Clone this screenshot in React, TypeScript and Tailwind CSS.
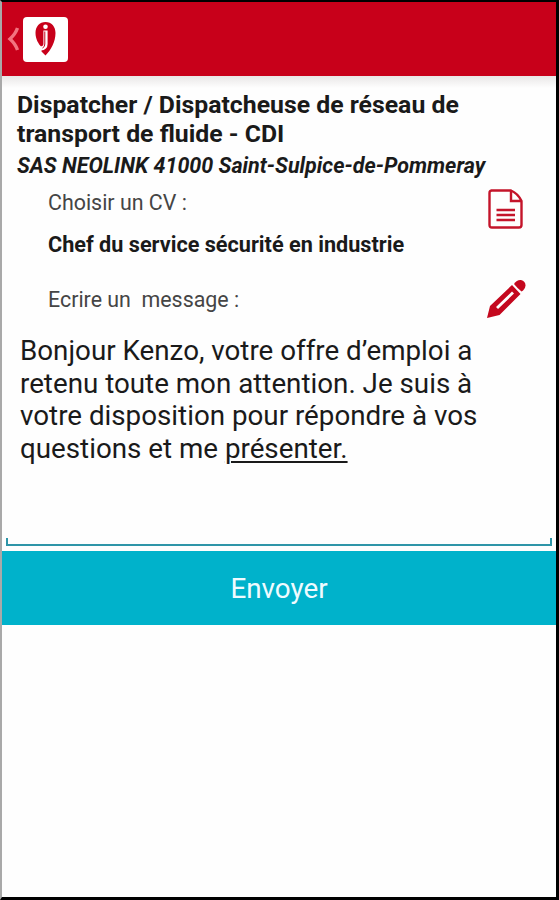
import React from "react";

const App = () => {
  return (
    <div className="flex h-[900px] w-[559px] flex-col overflow-hidden border-t-2 border-r-3 border-b-3 border-l-2 border-t-black border-r-black border-b-black border-l-[#a9a9a9] bg-[#fefefe] font-['Roboto',sans-serif] text-[#1a1a1a]">
      <Header />
      <main className="flex flex-col bg-linear-to-b from-[#e9e7e7] to-[#fefefe] to-[12px]">
        <JobSummary />

        {/* CV */}
        <section className="flex h-[77px] justify-between pr-[33px] pl-[46px]">
          <div className="flex flex-col">
            <p className="mt-[13px] text-[21.4px] leading-6 whitespace-pre text-[#454545]">Choisir un CV :</p>
            <p className="mt-[18px] text-[21.65px] leading-6 font-bold whitespace-pre">
              Chef du service sécurité en industrie
            </p>
          </div>
          <DocumentIcon />
        </section>

        {/* Message */}
        <section className="flex h-[66px] justify-between pr-[30px] pl-[46px]">
          <p className="mt-[33px] text-[21.4px] leading-6 whitespace-pre text-[#454545]">Ecrire un  message :</p>
          <PencilIcon />
        </section>
        <Message />
      </main>
      <button className="mt-[5px] h-[74px] shrink-0 bg-[#00b2cb] pt-[2px] text-[27.8px] text-[#effbff]">
        Envoyer
      </button>
    </div>
  );
};

const Header = () => {
  return (
    <header className="flex h-[74px] shrink-0 items-center bg-[#c8001a] pl-[5px]">
      <svg width="12" height="24" viewBox="0 0 12 24" fill="none" stroke="#f27480" strokeWidth="3.4">
        <path d="M10.500 1Q8.500 7 3 12Q8.500 17 10.500 23" />
      </svg>
      <div className="ml-[4px] flex size-[45px] items-center justify-center rounded-[4px] bg-white">
        <svg width="44" height="44" viewBox="0 0 44 44">
          <path
            d="M21.500 5C15.500 5 11.500 9.500 11.500 16C11.500 22 14.500 27 17.500 30L17.500 34.500L21.500 38.500C27 33 31.500 25 31.500 16C31.500 9.500 27.500 5 21.500 5Z"
            fill="#c8001a"
          />
          <circle cx="21.500" cy="9.800" r="2.300" fill="#fff" />
          <path d="M21.500 13.500V27Q21.500 31 16.500 31.500" fill="none" stroke="#fff" strokeWidth="4.200" />
          <path d="M20.800 14.500V27Q20.800 30 18.500 31" fill="none" stroke="#c8001a" strokeWidth="1" />
        </svg>
      </div>
    </header>
  );
};

const JobSummary = () => {
  return (
    <section className="flex flex-col pt-[14px] pl-[15px] whitespace-nowrap">
      <h1 className="text-[24.8px] leading-[29px] font-bold">
        Dispatcher / Dispatcheuse de réseau de
        <br />
        transport de fluide - CDI
      </h1>
      <p className="mt-[6px] text-[21.5px] leading-6 font-bold italic">
        SAS NEOLINK 41000 Saint-Sulpice-de-Pommeray
      </p>
    </section>
  );
};

const Message = () => {
  return (
    <section className="mx-[4px] flex h-[225px] flex-col justify-between">
      <p className="mt-[14px] pl-[14px] text-[27.75px] leading-[32.5px] whitespace-nowrap">
        Bonjour Kenzo, votre offre d’emploi a
        <br />
        retenu toute mon attention. Je suis à
        <br />
        votre disposition pour répondre à vos
        <br />
        questions et me{" "}
        <span className="underline decoration-[1.5px] underline-offset-[3px]">présenter.</span>
      </p>
      <div className="h-[8px] border-x-2 border-b-2 border-[#2e95a8]" />
    </section>
  );
};

const DocumentIcon = () => {
  return (
    <svg className="mt-[11px]" width="36" height="40" viewBox="0 0 36 40" fill="none" stroke="#c4142a" strokeWidth="2.4">
      <path d="M4 1.500H24Q31 4.500 34.500 12V36Q34.500 38.500 32 38.500H5Q2.500 38.500 2.500 36V4Q2.500 1.500 5 1.500Z" />
      <path d="M24 1.500V12H34.500" />
      <path d="M9.500 21H28M9.500 26H28M9.500 31H28" />
    </svg>
  );
};

const PencilIcon = () => {
  return (
    <svg className="mt-[24px] shrink-0" width="40" height="40" viewBox="0 0 40 40" fill="#c4081e">
      <path d="M28 5Q31 .5 35 1Q39.500 2 39.500 6.500Q39 10.500 35.500 12.500Q32 10 28 5Z" />
      <path
        fillRule="evenodd"
        d="M26 6L34.500 15L13.500 36L1 39L4 27ZM26 12.500L10 28L12 30L28 14.500Z"
      />
    </svg>
  );
};

export default App;
